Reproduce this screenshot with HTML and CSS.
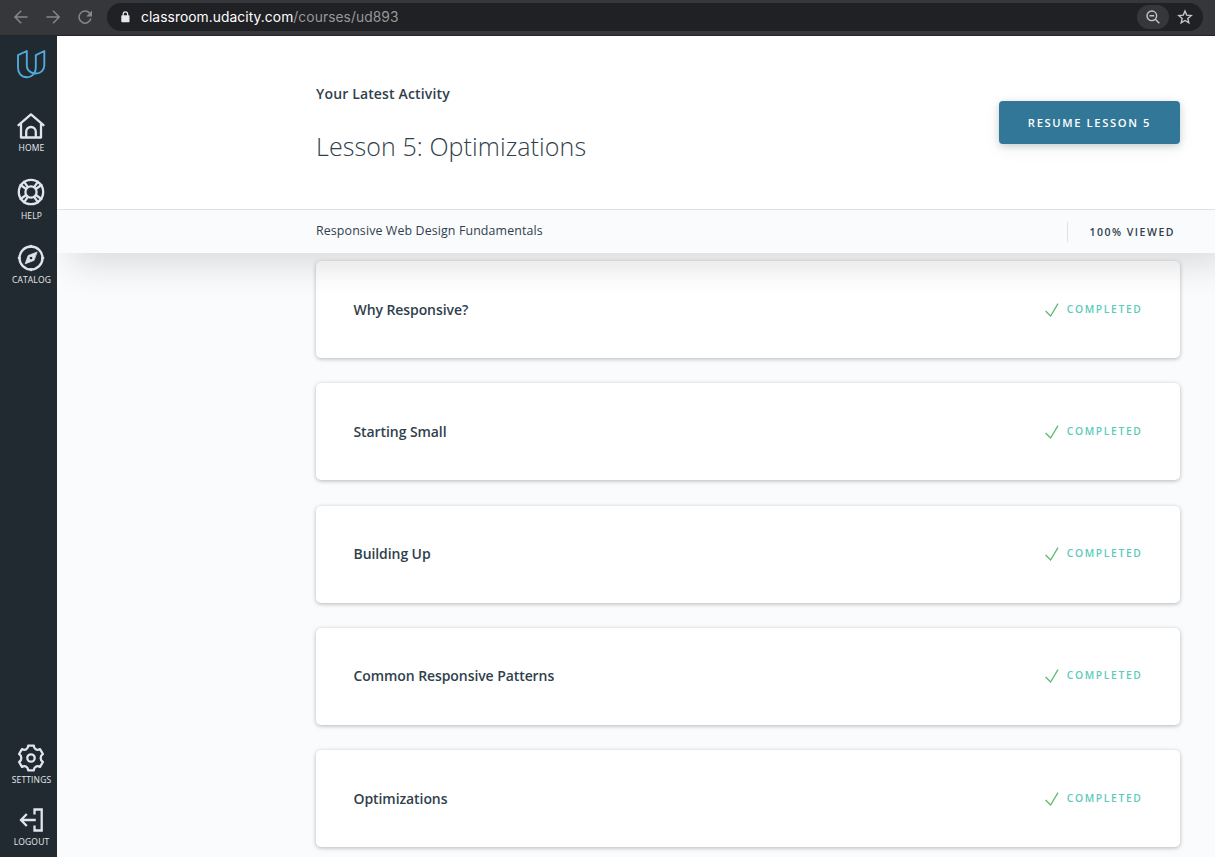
FILE: index.html
```html
<!DOCTYPE html>
<html lang="en">
<head>
<meta charset="utf-8">
<title>Responsive Web Design Fundamentals</title>
<link rel="stylesheet" href="styles.css">
</head>
<body>
<div class="browser-bar">
  <svg class="nav-icon" width="96" height="36" viewBox="0 0 96 36">
    <path d="M27.5 17H15M21.2 10.8 15 17l6.2 6.2M46.5 17H59M53 10.8l6.2 6.2-6.2 6.2"/>
    <path d="M89.7 13.3A6 6 0 1 0 90.9 18.5"/>
    <path class="solid" d="M92 10.6v5.8h-5.8z"/>
  </svg>
  <div class="address">
    <svg class="lock" width="9" height="12" viewBox="0 0 9 12"><rect x=".3" y="4.3" width="8.2" height="7" rx=".8"/><path d="M2.2 5V3a2.2 2.2 0 0 1 4.4 0v2"/></svg>
    <span class="url"><b>classroom.udacity.com</b>/courses/ud893</span>
    <span class="zoom-chip"><svg width="16" height="16" viewBox="0 0 16 16"><circle cx="6.8" cy="6.8" r="4.8"/><path d="M4.5 6.8h4.6M10.3 10.3l4 4"/></svg></span>
    <svg class="star" width="16" height="16" viewBox="0 0 16 16"><path d="m8 2 1.7 4.1 4.5.4-3.4 2.9 1 4.4L8 11.5l-3.8 2.3 1-4.4-3.4-2.9 4.5-.4z"/></svg>
  </div>
</div>
<div class="app">
  <nav class="sidebar">
    <svg class="logo" width="29" height="29" viewBox="0 0 29 29"><path d="M1 5.2 9.8 1v14.5c0 4 2.9 6.9 7.5 8-1.8 2.2-4 3.7-7.3 3.7C4.5 27.2 1 23.2 1 18zM18.8 5.2 27.3 1v14.5c0 5-4 8-8.5 8-.7 0-1.1 0-1.5-.1 1-1.6 1.5-3.6 1.5-5.8z"/></svg>
    <a class="item home"><svg width="30" height="28" viewBox="0 0 30 28"><path d="M2.5 13.2 15 2.4l12.5 10.8M5 11.5v14h20v-14M10.2 25V19.8a4.8 4.8 0 0 1 9.6 0V25"/></svg><span>HOME</span></a>
    <a class="item help"><svg width="30" height="30" viewBox="0 0 30 30"><circle cx="15" cy="15" r="12.2"/><circle cx="15" cy="15" r="5.6"/><path d="m4.6 8 5.2 3.7M8 4.6l3.7 5.2M22 4.6l-3.7 5.2M25.4 8l-5.2 3.7M25.4 22l-5.2-3.7M22 25.4l-3.7-5.2M8 25.4l3.7-5.2M4.6 22l5.2-3.7"/></svg><span>HELP</span></a>
    <a class="item catalog"><svg width="30" height="28" viewBox="0 0 30 28"><circle cx="15" cy="14" r="11.5"/><path d="M15 1.8v1M15 25.2v1M2.8 14h1M26.2 14h1"/><path class="needle" fill-rule="evenodd" d="m20.8 8.2-8.6 3.3-3 8.3 8.6-3.3zM15 12.2a1.8 1.8 0 1 1 0 3.6 1.8 1.8 0 0 1 0-3.6z"/></svg><span>CATALOG</span></a>
    <a class="item settings"><svg width="30" height="30" viewBox="0 0 30 30"><path d="M12.2 2.6h5.6c0 3.4 3 5.3 6.2 3.5l2.9 4.9c-3 1.8-3 6.2 0 8L24 23.9c-3.2-1.8-6.2.1-6.2 3.5h-5.6c0-3.4-3-5.3-6.2-3.5L3.1 19c3-1.8 3-6.2 0-8L6 6.1c3.2 1.8 6.2-.1 6.2-3.5z"/><circle cx="15" cy="15" r="3.7"/></svg><span>SETTINGS</span></a>
    <a class="item logout"><svg width="30" height="26" viewBox="0 0 30 26"><path d="M18.5 7.5V2.5h7.2v21h-7.2v-5M19.8 13H5.3M10.8 7 5 13l5.8 6"/></svg><span>LOGOUT</span></a>
  </nav>
  <main class="content">
    <header class="hero">
      <div class="activity"><h2>Your Latest Activity</h2><h1>Lesson 5: Optimizations</h1></div>
      <button class="resume">RESUME LESSON 5</button>
    </header>
    <div class="course-bar"><span class="course">Responsive Web Design Fundamentals</span><span class="viewed">100% VIEWED</span></div>
    <section class="lessons">
      <article class="card"><h3>Why Responsive?</h3><span class="status"><svg width="14" height="14" viewBox="0 0 14 14"><path d="m.6 8 5 5L13 .7"/></svg>COMPLETED</span></article>
      <article class="card"><h3>Starting Small</h3><span class="status"><svg width="14" height="14" viewBox="0 0 14 14"><path d="m.6 8 5 5L13 .7"/></svg>COMPLETED</span></article>
      <article class="card"><h3>Building Up</h3><span class="status"><svg width="14" height="14" viewBox="0 0 14 14"><path d="m.6 8 5 5L13 .7"/></svg>COMPLETED</span></article>
      <article class="card"><h3>Common Responsive Patterns</h3><span class="status"><svg width="14" height="14" viewBox="0 0 14 14"><path d="m.6 8 5 5L13 .7"/></svg>COMPLETED</span></article>
      <article class="card"><h3>Optimizations</h3><span class="status"><svg width="14" height="14" viewBox="0 0 14 14"><path d="m.6 8 5 5L13 .7"/></svg>COMPLETED</span></article>
    </section>
  </main>
</div>
</body>
</html>
```
FILE: styles.css
```css
* { box-sizing: border-box; }
body {
  margin: 0;
  height: 857px;
  overflow: hidden;
  display: flex;
  flex-direction: column;
  font-family: "Open Sans", sans-serif;
  color: #303f4c;
}
h1, h2, h3 { margin: 0; }
svg { display: block; flex: none; fill: none; }

.browser-bar {
  flex: none;
  height: 36px;
  display: flex;
  background: #36373b;
  border-bottom: 1px solid #222428;
}
.nav-icon { stroke: #86878a; stroke-width: 1.5; }
.nav-icon .solid { fill: #86878a; stroke: none; }
.address {
  flex: 1;
  height: 28px;
  margin: 3px 12px 0 11px;
  padding: 0 10px 0 14px;
  border-radius: 14px;
  background: #202124;
  display: flex;
  align-items: center;
}
.lock { fill: #e8e8e9; stroke: #e8e8e9; stroke-width: 1.2; }
.lock rect { stroke: none; }
.lock path { fill: none; }
.url {
  flex: 1;
  margin-left: 11px;
  font: 13.8px/20px Inter, sans-serif;
  letter-spacing: .07px;
  color: #97989b;
}
.url b { font-weight: 400; color: #fff; }
.zoom-chip {
  width: 32px;
  height: 24px;
  margin-right: 8px;
  border-radius: 12px;
  background: #36373a;
  display: grid;
  place-items: center;
}
.zoom-chip svg, .star { stroke: #c4c5c7; stroke-width: 1.4; }

.app { flex: 1; min-height: 0; display: flex; }
.sidebar {
  width: 57px;
  flex: none;
  background: #222a31;
  padding: 14px 0 9px 5px;
  display: flex;
  flex-direction: column;
  align-items: center;
}
.logo { stroke: #4eaadb; stroke-width: 1.9; stroke-linejoin: round; }
.item {
  display: flex;
  flex-direction: column;
  align-items: center;
  color: #e7ebf0;
  font-size: 8.5px;
  line-height: 12px;
  font-weight: 500;
}
.item svg { stroke: #dfe5ee; stroke-width: 2.3; stroke-linecap: round; stroke-linejoin: round; }
.item span { letter-spacing: .15px; padding-left: 1px; }
.item .needle { fill: #dfe5ee; stroke-width: .8; }
.home { margin-top: 33px; }
.home span { margin-top: 2px; }
.help { margin-top: 23px; }
.help span { margin-top: 3px; }
.catalog { margin-top: 22px; }
.catalog span { margin-top: 2px; }
.settings { margin-top: auto; }
.settings span { margin-top: 1px; }
.logout { margin-top: 21px; }
.logout span { margin-top: 3px; }
.logout svg { stroke-linecap: butt; stroke-linejoin: miter; }

.content {
  flex: 1;
  min-width: 0;
  background: #fafbfd;
  display: flex;
  flex-direction: column;
}
.hero {
  flex: none;
  height: 173px;
  padding: 0 35px 0 259px;
  display: flex;
  justify-content: space-between;
  align-items: center;
  background: #fff;
}
.activity { padding-top: 2px; }
.activity h2 { font-size: 14px; line-height: 24px; font-weight: 600; letter-spacing: .15px; }
.activity h1 {
  margin-top: 20px;
  font-size: 25px;
  line-height: 40px;
  font-weight: 300;
  letter-spacing: .09px;
}
.resume {
  width: 181px;
  height: 43px;
  padding: 0;
  border: 0;
  border-radius: 4px;
  background: #327797;
  box-shadow: 0 2px 7px rgba(25, 45, 55, .2), 0 5px 18px rgba(25, 45, 55, .06);
  color: #fff;
  font: 600 11.2px/20px "Open Sans", sans-serif;
  letter-spacing: 1.63px;
}
.course-bar {
  position: relative;
  z-index: 1;
  flex: none;
  height: 44px;
  padding: 0 40px 0 259px;
  border-top: 1px solid #dbe2e8;
  background: #fafbfd;
  box-shadow: 14px 10px 36px rgba(0, 0, 0, .14);
  clip-path: inset(0 0 -60px 0);
  display: flex;
  align-items: center;
  justify-content: space-between;
}
.course { font-size: 12.4px; line-height: 20px; margin-top: -2px; letter-spacing: .12px; }
.viewed {
  padding: 1px 0 0 21px;
  border-left: 1px solid #dbe2e8;
  font-size: 10.5px;
  line-height: 19px;
  font-weight: 600;
  letter-spacing: 1.52px;
}
.lessons {
  padding: 8px 35px 0 259px;
  display: grid;
  gap: 25.3px;
}
.card {
  height: 97px;
  padding: 0 37.5px;
  border-radius: 5px;
  background: #fff;
  box-shadow: 0 1px 4px rgba(0, 0, 0, .28);
  display: flex;
  align-items: center;
  justify-content: space-between;
}
.card h3 { font-size: 14px; line-height: 20px; font-weight: 600; letter-spacing: -.08px; }
.status {
  display: flex;
  align-items: center;
  gap: 8px;
  margin-top: -2px;
  color: #5dcabb;
  font-size: 10.3px;
  line-height: 14px;
  font-weight: 600;
  letter-spacing: 1.65px;
}
.status svg { margin-top: 2px; stroke: #5abb70; stroke-width: 1.3; }
```
